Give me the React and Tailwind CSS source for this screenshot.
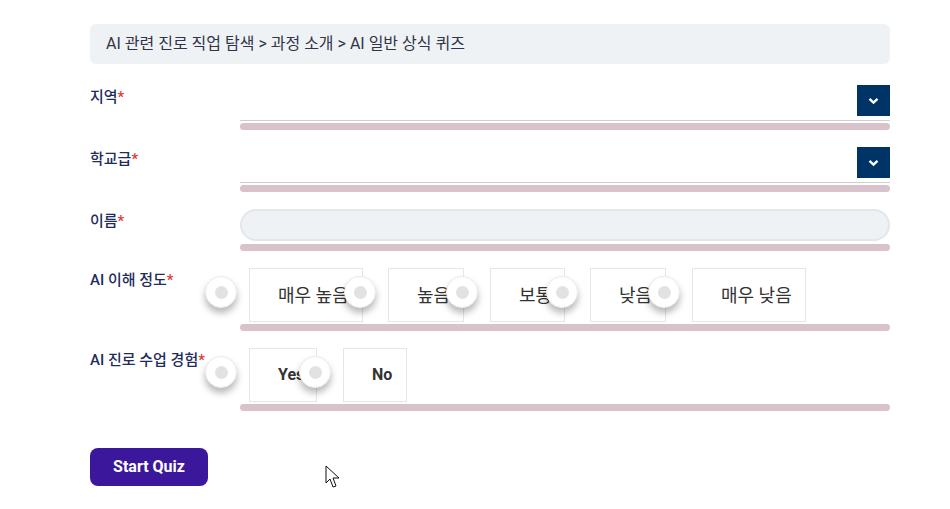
import { useState } from "react";

const levels = [
  { label: "매우 높음", w: "w-[114px]", m: "ml-[9px]" },
  { label: "높음", w: "w-[76px]", m: "ml-[25px]" },
  { label: "보통", w: "w-[75px]", m: "ml-[26px]" },
  { label: "낮음", w: "w-[76px]", m: "ml-[25px]" },
  { label: "매우 낮음", w: "w-[114px]", m: "ml-[26px]" },
];

const yesNo = [
  { label: "Yes", w: "w-[68px]", m: "ml-[9px]" },
  { label: "No", w: "w-[64px]", m: "ml-[26px]" },
];

function Label({ children }) {
  return (
    <div className="w-[150px] shrink-0 text-[15px] leading-[24px] font-medium text-[#1f2c5c]">
      {children}
      <span className="text-[#e0392f]">*</span>
    </div>
  );
}

function Bar({ className = "" }) {
  return <div className={"h-[7px] rounded-full bg-[#d9c2c9] " + className} />;
}

function SelectField() {
  return (
    <div className="h-[36px] border-b border-[#cfcfcf] flex justify-end items-start">
      <button
        type="button"
        className="w-[33px] h-[31px] bg-[#003366] flex items-center justify-center"
      >
        <svg width="11" height="8" viewBox="0 0 11 8">
          <polyline
            points="1.5,1.8 5.5,5.6 9.5,1.8"
            fill="none"
            stroke="white"
            strokeWidth="2.4"
          />
        </svg>
      </button>
    </div>
  );
}

function Radio() {
  return (
    <span className="absolute left-[-44px] top-[8px] w-[32px] h-[32px] rounded-full bg-white border border-[#ececec] shadow-[0_5px_7px_rgba(0,0,0,0.28)] flex items-center justify-center z-10">
      <span className="w-[13px] h-[13px] rounded-full bg-[#e2e2e2]" />
    </span>
  );
}

function Options({ items, bold, value, onPick }) {
  return (
    <div className="flex">
      {items.map((o) => (
        <div
          key={o.label}
          className={"relative " + o.m}
          onClick={() => onPick(o.label)}
        >
          <Radio />
          <div
            className={
              "h-[54px] border border-[#e6e6e6] bg-white flex items-center pl-[28px] text-[#333] whitespace-nowrap overflow-hidden " +
              o.w +
              (bold ? " font-bold text-[16px]" : " text-[18px]") +
              (value === o.label ? " bg-[#f7f7f7]" : "")
            }
          >
            {o.label}
          </div>
        </div>
      ))}
    </div>
  );
}

export default function App() {
  const [level, setLevel] = useState("");
  const [exp, setExp] = useState("");
  const [name, setName] = useState("");

  return (
    <div
      className="relative w-[950px] h-[509px] bg-white overflow-hidden"
      style={{ fontFamily: "Roboto, 'Noto Sans CJK KR', sans-serif" }}
    >
      <div className="ml-[90px] w-[800px] pt-[24px]">
        <div className="h-[40px] rounded-md bg-[#eff2f5] flex items-center px-4 text-[16px] text-[#2f3547]">
          AI 관련 진로 직업 탐색 &gt; 과정 소개 &gt; AI 일반 상식 퀴즈
        </div>

        <div className="mt-[21px] flex">
          <Label>지역</Label>
          <div className="flex-1">
            <SelectField />
            <Bar className="mt-[2px]" />
          </div>
        </div>

        <div className="mt-[17px] flex">
          <Label>학교급</Label>
          <div className="flex-1">
            <SelectField />
            <Bar className="mt-[2px]" />
          </div>
        </div>

        <div className="mt-[17px] flex">
          <Label>이름</Label>
          <div className="flex-1">
            <input
              value={name}
              onChange={(e) => setName(e.target.value)}
              className="block w-full h-[32px] rounded-[16px] bg-[#eff2f5] border-2 border-[#e3e6ea] px-4 text-[14px] outline-none"
            />
            <Bar className="mt-[3px]" />
          </div>
        </div>

        <div className="mt-[17px] flex">
          <Label>AI 이해 정도</Label>
          <div className="flex-1">
            <Options items={levels} value={level} onPick={setLevel} />
            <Bar className="mt-[2px]" />
          </div>
        </div>

        <div className="mt-[17px] flex">
          <Label>AI 진로 수업 경험</Label>
          <div className="flex-1">
            <Options items={yesNo} bold value={exp} onPick={setExp} />
            <Bar className="mt-[2px]" />
          </div>
        </div>

        <button
          type="button"
          className="mt-[37px] w-[118px] h-[38px] rounded-lg bg-[#3b189b] text-white text-[16px] font-bold"
        >
          Start Quiz
        </button>
      </div>

      <svg
        className="absolute left-[325px] top-[465px]"
        width="16"
        height="25"
        viewBox="0 0 16 25"
      >
        <path
          d="M1 1 L1 18 L5 14 L8 22 L11 21 L8 13 L14 13 Z"
          fill="white"
          stroke="#111"
          strokeWidth="1"
          strokeLinejoin="round"
        />
      </svg>
    </div>
  );
}
